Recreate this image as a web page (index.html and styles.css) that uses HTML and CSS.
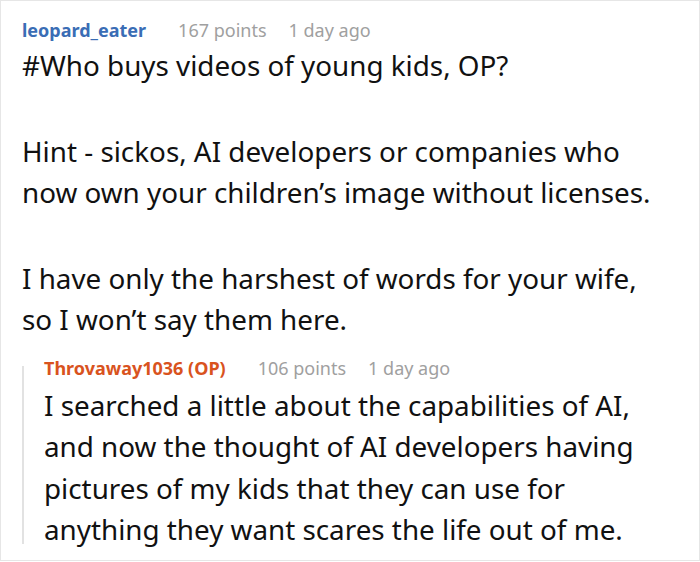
FILE: index.html
```html
<!DOCTYPE html>
<html>
<head>
<meta charset="utf-8">
<link rel="stylesheet" href="styles.css">
</head>
<body>
<div class="frame">
  <div class="comment">
    <div class="meta">
      <span class="user">leopard_eater</span>
      <span class="points">167 points</span>
      <span class="time">1 day ago</span>
    </div>
    <div class="body">
      <p>#Who buys videos of young kids, OP?</p>
      <p>Hint - sickos, AI developers or companies who<br>now own your children’s image without licenses.</p>
      <p>I have only the harshest of words for your wife,<br>so I won’t say them here.</p>
    </div>
  </div>
  <div class="reply">
    <div class="bar"></div>
    <div class="reply-content">
      <div class="meta">
        <span class="user op">Throvaway1036 (OP)</span>
        <span class="points">106 points</span>
        <span class="time">1 day ago</span>
      </div>
      <div class="body">
        <p>I searched a little about the capabilities of AI,<br>and now the thought of AI developers having<br>pictures of my kids that they can use for<br>anything they want scares the life out of me.</p>
      </div>
    </div>
  </div>
</div>
</body>
</html>
```

FILE: styles.css
```css
html, body {
  margin: 0;
  padding: 0;
  background: #ffffff;
}
.frame {
  width: 700px;
  height: 561px;
  box-sizing: border-box;
  border: 1px solid #e6e6e6;
  padding: 17px 0 0 21px;
  font-family: "Noto Sans", "Open Sans", sans-serif;
  color: #111111;
  overflow: hidden;
}
.meta {
  display: flex;
  align-items: baseline;
  font-size: 18px;
  line-height: 24px;
  white-space: nowrap;
}
.user {
  font-weight: 700;
  color: #3a6db5;
}
.user.op {
  color: #d9531e;
}
.points {
  color: #a0a0a0;
  margin-left: 32px;
}
.time {
  color: #a0a0a0;
  margin-left: 22px;
}
.body {
  font-size: 27.8px;
  line-height: 41px;
  margin-top: 3px;
  white-space: nowrap;
}
.body p {
  margin: 0 0 45px 0;
}
.comment .body p:last-child {
  margin-bottom: 0;
}
.reply {
  display: flex;
  margin-top: 16px;
}
.bar {
  width: 2px;
  flex: none;
  background: #e2e2e2;
  margin: 10px 0 6px 0;
}
.reply-content {
  padding-left: 20px;
}
.reply .body {
  margin-top: 5px;
  line-height: 41.3px;
}
.reply .body p {
  margin: 0;
}
```
